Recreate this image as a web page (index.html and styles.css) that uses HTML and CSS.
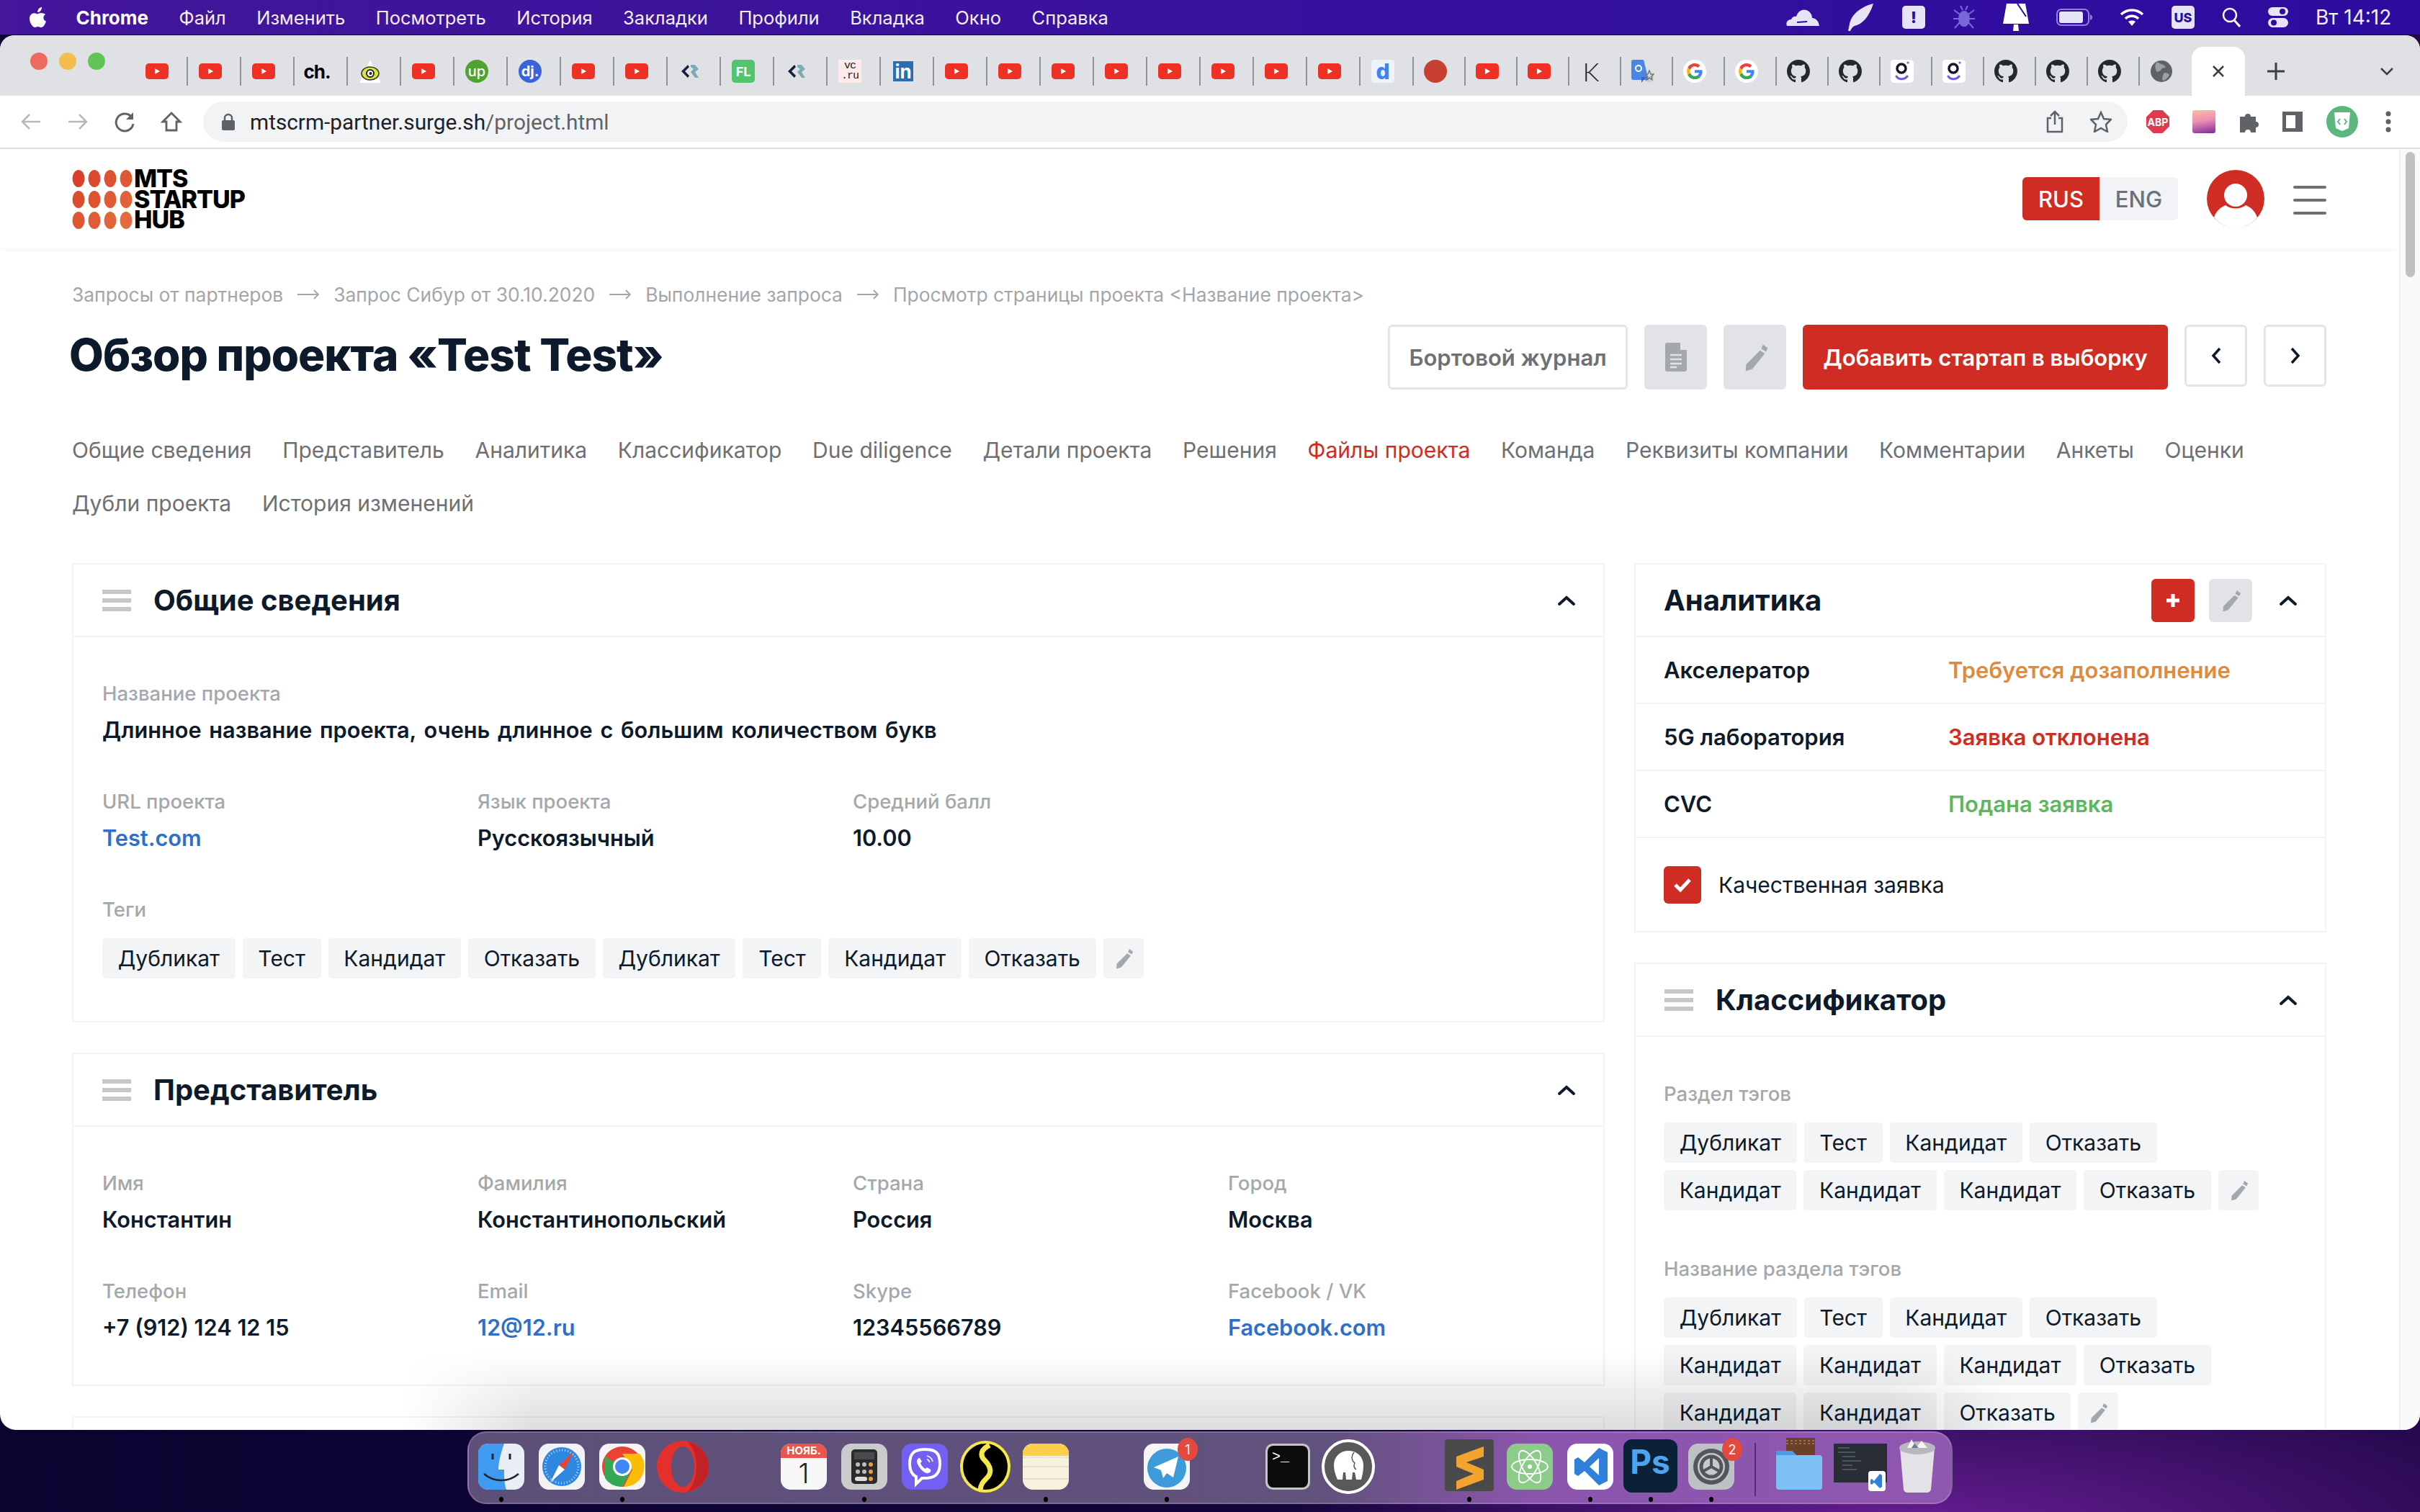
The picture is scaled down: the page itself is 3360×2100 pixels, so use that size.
FILE: index.html
```html
<!DOCTYPE html>
<html lang="ru">
<head>
  <meta charset="UTF-8">
  <title>Обзор проекта</title>
  <link rel="stylesheet" href="styles.css">
</head>
<body>

<svg class="defs" width="0" height="0">
  <symbol id="i-yt" viewBox="0 0 32 32"><rect y="5" width="32" height="22" rx="5" fill="#ee3124"/><path d="M13 12l7 4-7 4z" fill="#fff"/></symbol>
  <symbol id="i-lt" viewBox="0 0 32 32"><path d="M13 7L4 16l9 9 2-3-6-6 6-6z" fill="#14213d"/><path d="M17 7h6l5 6-5 4 5 8h-5l-6-8 4-4-4-3z" fill="#7fa9b5"/></symbol>
  <symbol id="i-g" viewBox="0 0 32 32"><circle cx="16" cy="16" r="16" fill="#fff"/><g transform="translate(5 5) scale(.46)"><path fill="#EA4335" d="M24 9.5c3.54 0 6.71 1.22 9.21 3.6l6.85-6.85C35.9 2.38 30.47 0 24 0 14.62 0 6.51 5.38 2.56 13.22l7.98 6.19C12.43 13.72 17.74 9.5 24 9.5z"/><path fill="#4285F4" d="M46.98 24.55c0-1.57-.15-3.09-.38-4.55H24v9.02h12.94c-.58 2.96-2.26 5.48-4.78 7.18l7.73 6c4.51-4.18 7.09-10.36 7.09-17.65z"/><path fill="#FBBC05" d="M10.53 28.59c-.48-1.45-.76-2.99-.76-4.59s.27-3.14.76-4.59l-7.98-6.19C.92 16.46 0 20.12 0 24c0 3.88.92 7.54 2.56 10.78l7.97-6.19z"/><path fill="#34A853" d="M24 48c6.48 0 11.93-2.13 16.06-5.81l-7.73-6c-2.15 1.45-4.92 2.3-8.33 2.3-6.26 0-11.57-4.22-13.47-9.91l-7.98 6.19C6.51 42.62 14.62 48 24 48z"/></g></symbol>
  <symbol id="i-gh" viewBox="0 0 16 16"><path fill="#24292e" d="M8 0C3.58 0 0 3.58 0 8c0 3.54 2.29 6.53 5.47 7.59.4.07.55-.17.55-.38 0-.19-.01-.82-.01-1.49-2.01.37-2.53-.49-2.69-.94-.09-.23-.48-.94-.82-1.13-.28-.15-.68-.52-.01-.53.63-.01 1.08.58 1.23.82.72 1.21 1.87.87 2.33.66.07-.52.28-.87.51-1.07-1.78-.2-3.64-.89-3.64-3.95 0-.87.31-1.59.82-2.15-.08-.2-.36-1.02.08-2.12 0 0 .67-.21 2.2.82.64-.18 1.32-.27 2-.27.68 0 1.36.09 2 .27 1.53-1.04 2.2-.82 2.2-.82.44 1.1.16 1.92.08 2.12.51.56.82 1.27.82 2.15 0 3.07-1.87 3.75-3.65 3.95.29.25.54.73.54 1.48 0 1.07-.01 1.93-.01 2.2 0 .21.15.46.55.38A8.013 8.013 0 0016 8c0-4.42-3.58-8-8-8z"/></symbol>
  <symbol id="i-o" viewBox="0 0 32 32"><rect width="32" height="32" rx="5" fill="#fff"/><circle cx="15" cy="12" r="6" fill="none" stroke="#14142b" stroke-width="3.5"/><circle cx="24" cy="4" r="1.6" fill="#6e5ae6"/><path d="M8 23c3 5 11 5 15 0" fill="none" stroke="#6e5ae6" stroke-width="3" stroke-linecap="round"/></symbol>
  <symbol id="i-pencil" viewBox="0 0 24 24"><path d="M18.5 1.500l4 3-1.500 3-4-2.500zM16 6.500l4 2.500L9.500 22 4 23.500l.5-5.500z"/></symbol>
  <symbol id="i-burger" viewBox="0 0 40 30"><path d="M0 0h40v6H0zM0 12h40v6H0zM0 24h40v6H0z" fill="#c5c7c9"/></symbol>
  <symbol id="i-up" viewBox="0 0 26 16"><path d="M3 13l10-9 10 9" fill="none" stroke="#0c1a2b" stroke-width="4" stroke-linecap="round"/></symbol>
</svg>

<header class="menubar">
  <svg class="apple" viewBox="0 0 24 30" width="24" height="30"><path fill="#fff" d="M17 1c.2 2.200-.7 3.800-1.700 5-1 1.200-2.500 2.100-4 2-.2-2 .7-3.800 1.700-5C14 1.800 15.700 1 17 1zM22 11c-1.700 1.200-2.600 2.700-2.600 4.700 0 2.300 1.300 4 3.600 5-.6 2-1.500 3.800-2.700 5.500-1.300 1.800-2.400 2.800-4 2.800-1.800 0-2.400-1.100-4.500-1.100-2.200 0-2.900 1.100-4.600 1.100-1.600 0-2.800-1.200-4.200-3.200C1.300 23.400 0 20 0 17c0-5 3.200-7.800 6.500-7.800 1.800 0 3.300 1.200 4.500 1.200 1.100 0 2.800-1.300 4.900-1.300 1.900 0 4.500.7 6.100 1.900z"/></svg>
  <strong class="menu-app">Chrome</strong>
  <span>Файл</span><span>Изменить</span><span>Посмотреть</span><span>История</span><span>Закладки</span><span>Профили</span><span>Вкладка</span><span>Окно</span><span>Справка</span>
  <div class="menu-right">
    <svg width="48" height="28" viewBox="0 0 48 28" class="m-cloud"><path fill="#e8e4f8" d="M2 26c-2-5 1-9 6-9 1-3 4-5 7-4 2-7 8-11 14-9 5 2 8 6 8 11 5 0 9 4 10 11z"/><path d="M16 21l14-1" stroke="#2c0c9f" stroke-width="2"/></svg>
    <svg width="38" height="38" viewBox="0 0 38 38" class="m-feather"><path fill="#e8e4f8" d="M36 0C20 4 6 14 3 28l-2 10 3 0c2-4 3-6 6-7 10-2 20-12 26-31z"/></svg>
    <span class="m-box m-excl">!</span>
    <svg width="32" height="36" viewBox="0 0 32 36" class="m-bug"><g fill="none" stroke="#7a68d8" stroke-width="2"><ellipse cx="16" cy="20" rx="7" ry="10" fill="#7a68d8"/><path d="M2 8l8 6M30 8l-8 6M1 20h8M31 20h-8M3 33l7-8M29 33l-7-8M11 2l3 6M21 2l-3 6"/></g></svg>
    <svg width="36" height="40" viewBox="0 0 36 40" class="m-lamp"><path fill="#fff" d="M5 1h26l5 28H0z"/><path fill="#fff" d="M15 30h6l1 9h-8z"/><path d="M20 1l12 18" stroke="#2c0c9f" stroke-width="2"/></svg>
    <svg width="50" height="24" viewBox="0 0 50 24" class="m-batt"><rect x="1" y="1" width="44" height="22" rx="6" fill="none" stroke="#8f84d8" stroke-width="2"/><rect x="4" y="4" width="33" height="16" rx="3" fill="#e8e4f8"/><path d="M47 8c2 1 3 2 3 4s-1 3-3 4z" fill="#8f84d8"/></svg>
    <svg width="34" height="26" viewBox="0 0 34 26" class="m-wifi"><g fill="none" stroke="#fff" stroke-width="3.500"><path d="M2 9c9-8 21-8 30 0M8 15c5-5 13-5 18 0"/></g><path d="M12 19c3-2 7-2 10 0l-5 6z" fill="#fff"/></svg>
    <span class="m-box m-us">US</span>
    <svg width="26" height="28" viewBox="0 0 26 28" class="m-search"><circle cx="11" cy="11" r="9" fill="none" stroke="#fff" stroke-width="2.500"/><path d="M17 18l8 9" stroke="#fff" stroke-width="3"/></svg>
    <svg width="28" height="28" viewBox="0 0 28 28" class="m-ctl"><rect y="0" width="28" height="12" rx="6" fill="#e8e4f8"/><circle cx="20" cy="6" r="4" fill="#2c0c9f"/><rect y="15" width="28" height="13" rx="6.500" fill="#e8e4f8"/><circle cx="8" cy="21.500" r="4" fill="#2c0c9f"/></svg>
    <span class="m-time">Вт 14:12</span>
  </div>
</header>

<main class="window">
  <div class="tabstrip">
    <div class="lights"><i class="l-red"></i><i class="l-yellow"></i><i class="l-green"></i></div>
    <div class="tabs">
      <div class="tab"><svg class="fav"><use href="#i-yt"/></svg></div>
      <div class="tab"><svg class="fav"><use href="#i-yt"/></svg></div>
      <div class="tab"><svg class="fav"><use href="#i-yt"/></svg></div>
      <div class="tab"><span class="fav-text fav-ch">ch.</span></div>
      <div class="tab"><svg class="fav" viewBox="0 0 32 32"><path d="M16 0l15 32H1z" fill="#fff"/><ellipse cx="16" cy="19" rx="12" ry="9" fill="#d8e63a" stroke="#333" stroke-width="1.500"/><circle cx="16" cy="19" r="5" fill="#fff" stroke="#222" stroke-width="2"/><circle cx="16.500" cy="19" r="2" fill="#222"/></svg></div>
      <div class="tab"><svg class="fav"><use href="#i-yt"/></svg></div>
      <div class="tab"><span class="fav-text fav-up">up</span></div>
      <div class="tab"><span class="fav-text fav-dj">dj.</span></div>
      <div class="tab"><svg class="fav"><use href="#i-yt"/></svg></div>
      <div class="tab"><svg class="fav"><use href="#i-yt"/></svg></div>
      <div class="tab"><svg class="fav"><use href="#i-lt"/></svg></div>
      <div class="tab"><span class="fav-text fav-fl">FL</span></div>
      <div class="tab"><svg class="fav"><use href="#i-lt"/></svg></div>
      <div class="tab"><span class="fav-text fav-vc">vc<br>.ru</span></div>
      <div class="tab"><span class="fav-text fav-in">in</span></div>
      <div class="tab"><svg class="fav"><use href="#i-yt"/></svg></div>
      <div class="tab"><svg class="fav"><use href="#i-yt"/></svg></div>
      <div class="tab"><svg class="fav"><use href="#i-yt"/></svg></div>
      <div class="tab"><svg class="fav"><use href="#i-yt"/></svg></div>
      <div class="tab"><svg class="fav"><use href="#i-yt"/></svg></div>
      <div class="tab"><svg class="fav"><use href="#i-yt"/></svg></div>
      <div class="tab"><svg class="fav"><use href="#i-yt"/></svg></div>
      <div class="tab"><svg class="fav"><use href="#i-yt"/></svg></div>
      <div class="tab"><span class="fav-text fav-d">d</span></div>
      <div class="tab tab-sm"><svg class="fav" viewBox="0 0 32 32"><circle cx="16" cy="16" r="16" fill="#c8402f"/></svg></div>
      <div class="tab tab-sm"><svg class="fav"><use href="#i-yt"/></svg></div>
      <div class="tab tab-sm"><svg class="fav"><use href="#i-yt"/></svg></div>
      <div class="tab tab-sm"><span class="fav-text fav-k">K</span></div>
      <div class="tab tab-sm"><svg class="fav" viewBox="0 0 32 32"><path d="M18 22l14 0-6 10-8-4z" fill="#c9ccd0"/><path d="M3 0h14l7 28H3a3 3 0 01-3-3V3a3 3 0 013-3z" fill="#4a86e8"/><path d="M14 24v8l6-8z" fill="#3a66b8"/><path d="M25 15l2 5h4l-3 3 1 5-4-3-4 3 1-5-3-3h4z" fill="none" stroke="#777" stroke-width="1.500"/><circle cx="10" cy="12" r="4" fill="none" stroke="#fff" stroke-width="2"/></svg></div>
      <div class="tab tab-sm"><svg class="fav"><use href="#i-g"/></svg></div>
      <div class="tab tab-sm"><svg class="fav"><use href="#i-g"/></svg></div>
      <div class="tab tab-sm"><svg class="fav"><use href="#i-gh"/></svg></div>
      <div class="tab tab-sm"><svg class="fav"><use href="#i-gh"/></svg></div>
      <div class="tab tab-sm"><svg class="fav"><use href="#i-o"/></svg></div>
      <div class="tab tab-sm"><svg class="fav"><use href="#i-o"/></svg></div>
      <div class="tab tab-sm"><svg class="fav"><use href="#i-gh"/></svg></div>
      <div class="tab tab-sm"><svg class="fav"><use href="#i-gh"/></svg></div>
      <div class="tab tab-sm"><svg class="fav"><use href="#i-gh"/></svg></div>
      <div class="tab tab-sm tab-last"><svg class="fav" viewBox="0 0 32 32"><circle cx="16" cy="16" r="15" fill="#5f6368"/><path d="M10 3c4 3 9 3 12 7-3 2-6 1-7 5l-5 2C7 13 6 7 10 3zM20 18c3 0 6 1 7 3-2 4-5 7-9 8-2-3 0-8 2-11z" fill="#9aa0a6"/></svg></div>
      <div class="tab-active"><svg width="18" height="18" viewBox="0 0 18 18"><path d="M2 2l14 14M16 2L2 16" stroke="#3c4043" stroke-width="2.500"/></svg></div>
      <svg class="tab-new" width="26" height="26" viewBox="0 0 26 26"><path d="M13 1v24M1 13h24" stroke="#3c4043" stroke-width="3"/></svg>
      <svg class="tab-more" width="20" height="12" viewBox="0 0 20 12"><path d="M2 2l8 8 8-8" fill="none" stroke="#3c4043" stroke-width="2.500"/></svg>
    </div>
  </div>

  <div class="toolbar">
    <svg class="tb-icon tb-back" width="30" height="30" viewBox="0 0 30 30"><path d="M28 15H3M13 5L3 15l10 10" fill="none" stroke="#b5b8bc" stroke-width="2.500"/></svg>
    <svg class="tb-icon" width="30" height="30" viewBox="0 0 30 30"><path d="M2 15h25M17 5l10 10-10 10" fill="none" stroke="#b5b8bc" stroke-width="2.500"/></svg>
    <svg class="tb-icon" width="30" height="30" viewBox="0 0 30 30"><path d="M25 9a12 12 0 10 2 9" fill="none" stroke="#5f6368" stroke-width="3"/><path d="M27 2v10H17z" fill="#5f6368"/></svg>
    <svg class="tb-icon" width="30" height="30" viewBox="0 0 30 30"><path d="M15 3L3 15h5v12h14V15h5z" fill="none" stroke="#5f6368" stroke-width="2.800"/></svg>
    <div class="omnibox">
      <svg width="18" height="24" viewBox="0 0 18 24"><path d="M4 10V7a5 5 0 0110 0v3" fill="none" stroke="#5f6368" stroke-width="2.500"/><rect y="10" width="18" height="14" rx="2" fill="#5f6368"/></svg>
      <span class="url">mtscrm-partner.surge.sh<span class="url-path">/project.html</span></span>
      <svg class="omni-share" width="24" height="32" viewBox="0 0 24 32"><path d="M7 11H2v19h20V11h-5M12 20V2M6 8l6-6 6 6" fill="none" stroke="#5f6368" stroke-width="2.500"/></svg>
      <svg class="omni-star" width="30" height="30" viewBox="0 0 30 30"><path d="M15 2l4 9 10 1-7 7 2 10-9-5-9 5 2-10-7-7 10-1z" fill="none" stroke="#5f6368" stroke-width="2.500"/></svg>
    </div>
    <div class="ext-abp">ABP</div>
    <div class="ext-color"></div>
    <svg class="ext-puzzle" width="30" height="30" viewBox="0 0 30 30"><path fill="#5f6368" d="M1 8h7a4 4 0 118 0h7v7a4 4 0 110 8v7H16a4 4 0 10-8 0H1z"/></svg>
    <svg class="ext-side" width="28" height="28" viewBox="0 0 28 28"><rect x="2.500" y="2.500" width="23" height="23" fill="none" stroke="#5f6368" stroke-width="5"/><rect x="18" y="2" width="8" height="24" fill="#5f6368"/></svg>
    <div class="ext-green"><svg width="24" height="28" viewBox="0 0 24 28"><path d="M1 1h22l-2 22-9 4-9-4z" fill="#fff"/><path d="M9 10l-3 4 3 4M15 10l3 4-3 4" fill="none" stroke="#5bb77e" stroke-width="2"/></svg></div>
    <svg class="ext-dots" width="8" height="30" viewBox="0 0 8 30"><circle cx="4" cy="4" r="3.500" fill="#5f6368"/><circle cx="4" cy="15" r="3.500" fill="#5f6368"/><circle cx="4" cy="26" r="3.500" fill="#5f6368"/></svg>
  </div>

  <div class="viewport">
    <div class="page">
      <div class="site-header">
        <div class="logo">
          <svg width="86" height="82" viewBox="0 0 86 82">
            <g fill="#d9402b"><ellipse cx="9" cy="12" rx="8.500" ry="12"/><ellipse cx="31" cy="12" rx="8.500" ry="12" fill="#db4a2e"/><ellipse cx="53" cy="12" rx="8.500" ry="12" fill="#dd5231"/><ellipse cx="75" cy="12" rx="8.500" ry="12" fill="#df5a34"/></g>
            <g fill="#dc4c2e"><ellipse cx="9" cy="41" rx="8.500" ry="12"/><ellipse cx="31" cy="41" rx="8.500" ry="12" fill="#de5431"/><ellipse cx="53" cy="41" rx="8.500" ry="12" fill="#e05b35"/><ellipse cx="75" cy="41" rx="8.500" ry="12" fill="#e16138"/></g>
            <g fill="#df5631"><ellipse cx="9" cy="70" rx="8.500" ry="12"/><ellipse cx="31" cy="70" rx="8.500" ry="12" fill="#e05c35"/><ellipse cx="53" cy="70" rx="8.500" ry="12" fill="#e2653a"/><ellipse cx="75" cy="70" rx="8.500" ry="12" fill="#e36b3e"/></g>
          </svg>
          <div class="logo-text">MTS<br>STARTUP<br>HUB</div>
        </div>
        <div class="header-right">
          <div class="lang"><span class="lang-on">RUS</span><span class="lang-off">ENG</span></div>
          <svg class="avatar" width="80" height="80" viewBox="0 0 80 80"><circle cx="40" cy="40" r="40" fill="#cf2d24"/><circle cx="40" cy="35" r="16" fill="#fff"/><path d="M10 66c3-9 9-14 16-17 8 6 20 6 28 0 7 3 13 8 16 17-16 19-44 19-60 0z" fill="#fff"/></svg>
          <div class="site-burger"><i></i><i></i><i></i></div>
        </div>
      </div>

      <div class="content">
        <nav class="crumbs">
          <span>Запросы от партнеров</span><svg width="30" height="14" viewBox="0 0 30 14"><path d="M0 7h29M23 1l6 6-6 6" fill="none" stroke="#a3a6aa" stroke-width="1.800"/></svg>
          <span>Запрос Сибур от 30.10.2020</span><svg width="30" height="14" viewBox="0 0 30 14"><path d="M0 7h29M23 1l6 6-6 6" fill="none" stroke="#a3a6aa" stroke-width="1.800"/></svg>
          <span>Выполнение запроса</span><svg width="30" height="14" viewBox="0 0 30 14"><path d="M0 7h29M23 1l6 6-6 6" fill="none" stroke="#a3a6aa" stroke-width="1.800"/></svg>
          <span>Просмотр страницы проекта &lt;Название проекта&gt;</span>
        </nav>

        <div class="title-row">
          <h1>Обзор проекта «Test Test»</h1>
          <div class="actions">
            <button class="btn btn-outline">Бортовой журнал</button>
            <button class="btn btn-gray"><svg width="30" height="40" viewBox="0 0 30 40"><path d="M3 0h17l10 11v26a3 3 0 01-3 3H3a3 3 0 01-3-3V3a3 3 0 013-3z" fill="#a4a8ad"/><path d="M21 0l9 10h-9z" fill="#e1e3e6"/><path d="M7 17h16M7 23h16M7 29h16M7 34h9" stroke="#e1e3e6" stroke-width="2.500"/></svg></button>
            <button class="btn btn-gray"><svg class="pencil" width="40" height="40"><use href="#i-pencil"/></svg></button>
            <button class="btn btn-red">Добавить стартап в выборку</button>
            <button class="btn btn-nav"><svg width="14" height="24" viewBox="0 0 14 24"><path d="M12 2L3 12l9 10" fill="none" stroke="#0c1a2b" stroke-width="3.500"/></svg></button>
            <button class="btn btn-nav"><svg width="14" height="24" viewBox="0 0 14 24"><path d="M2 2l9 10-9 10" fill="none" stroke="#0c1a2b" stroke-width="3.500"/></svg></button>
          </div>
        </div>

        <div class="nav-tabs">
          <a>Общие сведения</a><a>Представитель</a><a>Аналитика</a><a>Классификатор</a><a>Due diligence</a><a>Детали проекта</a><a>Решения</a><a class="nav-active">Файлы проекта</a><a>Команда</a><a>Реквизиты компании</a><a>Комментарии</a><a>Анкеты</a><a>Оценки</a><a>Дубли проекта</a><a>История изменений</a>
        </div>

        <div class="columns">
          <div class="col-main">
            <section class="card">
              <div class="card-head">
                <svg class="drag" width="40" height="30"><use href="#i-burger"/></svg>
                <h2>Общие сведения</h2>
                <svg class="chevron" width="26" height="16"><use href="#i-up"/></svg>
              </div>
              <div class="card-body info-grid">
                <div class="field field-wide"><label>Название проекта</label><div class="value value-long">Длинное название проекта, очень длинное с большим количеством букв</div></div>
                <div class="field"><label>URL проекта</label><a class="value link">Test.com</a></div>
                <div class="field"><label>Язык проекта</label><div class="value">Русскоязычный</div></div>
                <div class="field field-span2"><label>Средний балл</label><div class="value">10.00</div></div>
                <div class="field field-wide">
                  <label>Теги</label>
                  <div class="chips">
                    <span class="chip">Дубликат</span><span class="chip">Тест</span><span class="chip">Кандидат</span><span class="chip">Отказать</span><span class="chip">Дубликат</span><span class="chip">Тест</span><span class="chip">Кандидат</span><span class="chip">Отказать</span><span class="chip chip-edit"><svg class="pencil" width="30" height="30"><use href="#i-pencil"/></svg></span>
                  </div>
                </div>
              </div>
            </section>

            <section class="card">
              <div class="card-head">
                <svg class="drag" width="40" height="30"><use href="#i-burger"/></svg>
                <h2>Представитель</h2>
                <svg class="chevron" width="26" height="16"><use href="#i-up"/></svg>
              </div>
              <div class="card-body info-grid">
                <div class="field"><label>Имя</label><div class="value">Константин</div></div>
                <div class="field"><label>Фамилия</label><div class="value">Константинопольский</div></div>
                <div class="field"><label>Страна</label><div class="value">Россия</div></div>
                <div class="field"><label>Город</label><div class="value">Москва</div></div>
                <div class="field"><label>Телефон</label><div class="value">+7 (912) 124 12 15</div></div>
                <div class="field"><label>Email</label><a class="value link">12@12.ru</a></div>
                <div class="field"><label>Skype</label><div class="value">12345566789</div></div>
                <div class="field"><label>Facebook / VK</label><a class="value link">Facebook.com</a></div>
              </div>
            </section>

            <section class="card card-next"></section>
          </div>

          <aside class="col-side">
            <section class="card">
              <div class="card-head card-head-side">
                <h2>Аналитика</h2>
                <button class="mini mini-red"><svg width="24" height="24" viewBox="0 0 24 24"><path d="M12 3v18M3 12h18" stroke="#fff" stroke-width="5"/></svg></button>
                <button class="mini mini-gray"><svg class="pencil" width="32" height="32"><use href="#i-pencil"/></svg></button>
                <svg class="chevron chevron-side" width="26" height="16"><use href="#i-up"/></svg>
              </div>
              <div class="status-row"><span class="status-name">Акселератор</span><span class="st-orange">Требуется дозаполнение</span></div>
              <div class="status-row"><span class="status-name">5G лаборатория</span><span class="st-red">Заявка отклонена</span></div>
              <div class="status-row"><span class="status-name">CVC</span><span class="st-green">Подана заявка</span></div>
              <div class="check-row">
                <span class="checkbox"><svg width="26" height="22" viewBox="0 0 26 22"><path d="M3 11l7 7L23 4" fill="none" stroke="#fff" stroke-width="5"/></svg></span>
                <span>Качественная заявка</span>
              </div>
            </section>

            <section class="card">
              <div class="card-head">
                <svg class="drag" width="40" height="30"><use href="#i-burger"/></svg>
                <h2>Классификатор</h2>
                <svg class="chevron" width="26" height="16"><use href="#i-up"/></svg>
              </div>
              <div class="card-body tags-body">
                <div class="tag-group">
                  <label>Раздел тэгов</label>
                  <div class="chips">
                    <span class="chip">Дубликат</span><span class="chip">Тест</span><span class="chip">Кандидат</span><span class="chip">Отказать</span><span class="chip">Кандидат</span><span class="chip">Кандидат</span><span class="chip">Кандидат</span><span class="chip">Отказать</span><span class="chip chip-edit"><svg class="pencil" width="30" height="30"><use href="#i-pencil"/></svg></span>
                  </div>
                </div>
                <div class="tag-group">
                  <label>Название раздела тэгов</label>
                  <div class="chips">
                    <span class="chip">Дубликат</span><span class="chip">Тест</span><span class="chip">Кандидат</span><span class="chip">Отказать</span><span class="chip">Кандидат</span><span class="chip">Кандидат</span><span class="chip">Кандидат</span><span class="chip">Отказать</span><span class="chip">Кандидат</span><span class="chip">Кандидат</span><span class="chip">Отказать</span><span class="chip chip-edit"><svg class="pencil" width="30" height="30"><use href="#i-pencil"/></svg></span>
                  </div>
                </div>
              </div>
            </section>
          </aside>
        </div>
      </div>
    </div>
    <div class="scrollbar"><div class="scroll-thumb"></div></div>
    <div class="dock-shade"></div>
  </div>
</main>

<footer class="dock">
  <div class="slot on"><svg viewBox="-10 -10 84 84"><rect width="64" height="64" rx="14" fill="#e9eef4"/><path d="M14 0h22c-5 14-8 26-8 36h8c0 10 0 19 3 28H14A14 14 0 010 50V14A14 14 0 0114 0z" fill="#3f9bf0"/><path d="M20 14v8M44 14v8" stroke="#1a2433" stroke-width="3"/><path d="M8 42c14 12 34 12 48 0" fill="none" stroke="#1a2433" stroke-width="2.500"/></svg></div>
  <div class="slot"><svg viewBox="-10 -10 84 84"><rect width="64" height="64" rx="14" fill="#f1f2f4"/><circle cx="32" cy="32" r="27" fill="#2f87e0"/><circle cx="32" cy="32" r="23" fill="none" stroke="#bfdcf7" stroke-width="3" stroke-dasharray="1 3"/><path d="M48 12L28 30l8 6z" fill="#ea4335"/><path d="M16 54l20-18-8-6z" fill="#fff"/></svg></div>
  <div class="slot on"><svg viewBox="-10 -10 84 84"><rect width="64" height="64" rx="14" fill="#f4f4f5"/><circle cx="32" cy="32" r="28" fill="#ea4335"/><path d="M32 32L8 18v30a28 28 0 0024 12l14-26z" fill="#34a853"/><path d="M32 14h24a28 28 0 01-22 46l12-24z" fill="#fbbc05"/><circle cx="32" cy="32" r="13" fill="#fff"/><circle cx="32" cy="32" r="10" fill="#4285f4"/></svg></div>
  <div class="slot"><svg viewBox="-10 -10 84 84"><path fill-rule="evenodd" d="M32-4C12-4-4 12-4 32S12 68 32 68 68 52 68 32 52-4 32-4zM32 4c9 0 16 12 16 28S41 60 32 60 16 48 16 32 23 4 32 4z" fill="#e3302c"/><path d="M38-3c18 4 30 18 30 35S56 63 38 67c8-6 13-20 13-35S46 3 38-3z" fill="#c22226"/></svg></div>
  <div class="slot slot-empty"></div>
  <div class="slot"><svg viewBox="-10 -10 84 84"><rect width="64" height="64" rx="14" fill="#f7f7f7"/><path d="M14 0h36a14 14 0 0114 14v6H0v-6A14 14 0 0114 0z" fill="#e8574d"/><text class="dock-cal-month" x="32" y="15" text-anchor="middle">НОЯБ.</text><text class="dock-cal-day" x="32" y="55" text-anchor="middle">1</text></svg></div>
  <div class="slot on"><svg viewBox="-10 -10 84 84"><rect width="64" height="64" rx="14" fill="#c9cbcc"/><rect x="14" y="8" width="36" height="48" rx="5" fill="#2b2b2d"/><rect x="18" y="12" width="28" height="10" fill="#4a4a4c"/><g fill="#bdbdbd"><circle cx="23" cy="29" r="3"/><circle cx="32" cy="29" r="3"/><circle cx="23" cy="39" r="3"/><circle cx="32" cy="39" r="3"/></g><g fill="#e89a3c"><circle cx="41" cy="29" r="3"/><circle cx="41" cy="39" r="3"/><circle cx="41" cy="49" r="3"/></g><rect x="19" y="46" width="17" height="6" rx="3" fill="#dcdcdc"/></svg></div>
  <div class="slot"><svg viewBox="-10 -10 84 84"><rect width="64" height="64" rx="14" fill="#7360f2"/><path d="M32 8c-14 0-21 5-21 20 0 9 3 15 9 18v10l8-8c16 1 25-4 25-20S46 8 32 8z" fill="none" stroke="#fff" stroke-width="4"/><path d="M24 20c-4 2-4 6 0 12s9 10 13 9c3-1 4-3 3-5l-5-3-2 2c-3-1-6-5-7-8l2-2-3-5z" fill="#fff"/><path d="M35 17c4 1 7 4 8 8M35 22c2 0 3 2 4 4" fill="none" stroke="#fff" stroke-width="1.500"/></svg></div>
  <div class="slot"><svg viewBox="-10 -10 84 84"><ellipse cx="32" cy="32" rx="33" ry="34" fill="#000" stroke="#f5e94a" stroke-width="4"/><path d="M38 2c-12 6-14 14-7 21 9 9 11 18 2 26-4 4-7 7-8 15" fill="none" stroke="#f5e94a" stroke-width="7"/></svg></div>
  <div class="slot on"><svg viewBox="-10 -10 84 84"><rect width="64" height="64" rx="14" fill="#f7f2de"/><path d="M14 0h36a14 14 0 0114 14v3H0v-3A14 14 0 0114 0z" fill="#fbcf4c"/><path d="M0 32h64M0 49h64" stroke="#ddd9c8" stroke-width="1.500"/><path d="M0 19h64" stroke="#b9b29c" stroke-dasharray="1 2"/></svg></div>
  <div class="slot slot-empty"></div>
  <div class="slot on"><svg viewBox="-10 -10 84 84"><rect width="64" height="64" rx="14" fill="#f3f5f7"/><circle cx="32" cy="34" r="27" fill="#3d9bd9"/><path d="M48 18L14 33l10 4 3 11 5-7 9 6z" fill="#fff"/></svg><span class="badge">1</span></div>
  <div class="slot slot-empty"></div>
  <div class="slot"><svg viewBox="-10 -10 84 84"><rect width="62" height="64" rx="10" fill="#c4c5c6" x="1"/><rect width="56" height="58" rx="8" fill="#0b0b0c" x="4" y="3"/><text class="dock-term" x="10" y="24">&gt;_</text></svg></div>
  <div class="slot"><svg viewBox="-10 -10 84 84"><ellipse cx="32" cy="32" rx="35" ry="36" fill="#595959" stroke="#fff" stroke-width="4"/><path d="M12 30c0-12 9-20 20-20 12 0 21 8 21 20 0 7-1 12-3 20h-7l-2-10h-3l-1 10h-8l-1-10h-3l-1 10h-7c-3-7-5-13-5-20z" fill="#fff"/><path d="M40 12c-5 6-3 12 1 15-2 4-1 7 2 9" fill="none" stroke="#595959" stroke-width="1.500"/></svg></div>
  <div class="slot slot-empty"></div>
  <div class="slot on"><svg viewBox="-10 -10 84 84"><rect x="-2" y="-6" width="68" height="72" rx="4" fill="#4a4a4a"/><path d="M52 4L14 18v14l24 10-24 10v12l38-14V36L28 26l24-8z" fill="#f3a32f"/></svg></div>
  <div class="slot"><svg viewBox="-10 -10 84 84"><rect width="64" height="64" rx="14" fill="#8ccb8a"/><g fill="none" stroke="#fff" stroke-width="1.800"><ellipse cx="32" cy="32" rx="10" ry="25" transform="rotate(-30 32 32)"/><ellipse cx="32" cy="32" rx="10" ry="25" transform="rotate(30 32 32)"/><ellipse cx="32" cy="32" rx="25" ry="10" transform="rotate(0 32 32)"/></g><circle cx="32" cy="32" r="3" fill="#fff"/></svg></div>
  <div class="slot on"><svg viewBox="-10 -10 84 84"><rect width="64" height="64" rx="14" fill="#fff"/><path d="M44 6l12 6v40l-12 6-20-20-9 7-5-3V22l5-3 9 7zM44 20L31 32l13 12z" fill="#2f80d8"/></svg></div>
  <div class="slot on"><svg viewBox="-10 -10 84 84"><rect x="-6" y="-6" width="75" height="74" rx="12" fill="#0b2138"/><text class="dock-ps" x="31" y="42" text-anchor="middle">Ps</text></svg></div>
  <div class="slot on"><svg viewBox="-10 -10 84 84"><rect width="64" height="64" rx="14" fill="#bfc2c4"/><circle cx="32" cy="32" r="25" fill="#54575a"/><circle cx="32" cy="32" r="19" fill="#c8cacc"/><circle cx="32" cy="32" r="14" fill="none" stroke="#54575a" stroke-width="5"/><path d="M32 32V16M32 32L18 40M32 32l14 8" stroke="#54575a" stroke-width="4"/></svg><span class="badge badge-2">2</span></div>
  <div class="dock-sep"></div>
  <div class="slot slot-docs"><svg viewBox="-10 -10 84 84"><rect x="14" y="-8" width="40" height="26" fill="#6b4028"/><path d="M14 -4h40M14 0h40" stroke="#c99a6b" stroke-dasharray="3 3"/><path d="M0 14a4 4 0 014-4h18l6 6h32a4 4 0 014 4v40a4 4 0 01-4 4H4a4 4 0 01-4-4z" fill="#7cc0f5"/><path d="M0 10h22l6 6H0z" fill="#4a9ae4"/></svg></div>
  <div class="slot slot-docs"><svg viewBox="-10 -10 84 84"><rect x="-4" y="0" width="74" height="54" fill="#282c34"/><path d="M2 6h16M2 12h24M8 18h18M8 24h26M8 30h14M8 36h20" stroke="#5a6270" stroke-width="1.500"/><rect x="44" y="38" width="24" height="28" rx="4" fill="#fff"/><path d="M60 42l3 2v16l-3 2-8-8-3 3-2-1v-6l2-1 3 3z" fill="#2f80d8"/></svg></div>
  <div class="slot slot-trash"><svg viewBox="-10 -10 84 84"><path d="M8 6h48l-5 58a6 6 0 01-6 4H19a6 6 0 01-6-4z" fill="#e4e2e6"/><ellipse cx="32" cy="6" rx="25" ry="9" fill="#b9b6bd"/><path d="M18 6l6-12 6 12zM30 6l8-10 8 10z" fill="#f5f5f5"/><path d="M24 6l4-6 6 6z" fill="#6a7b8c"/></svg></div>
</footer>

</body>
</html>
```

FILE: styles.css
```css
* {
  box-sizing: border-box;
}
html, body {
  margin: 0;
  height: 100%;
}
body {
  position: relative;
  width: 3360px;
  height: 2100px;
  overflow: hidden;
  font-family: Inter, "Noto Sans", sans-serif;
  color: #0c1a2b;
  background:
    radial-gradient(ellipse 900px 260px at 2650px 2140px, #6d1f9a 0%, rgba(109,31,154,0) 100%),
    linear-gradient(90deg, #0b0330 0%, #12053a 55%, #24084c 100%);
}
.defs {
  position: absolute;
}

/* mac menu bar */
.menubar {
  height: 49px;
  display: flex;
  align-items: center;
  gap: 42.500px;
  padding-left: 41px;
  background: linear-gradient(90deg, #43169a 0%, #3a129c 40%, #2c0c9f 100%);
  color: #f2effb;
  font-size: 25.500px;
  border-bottom: 1px solid #14063f;
}
.apple {
  margin-right: -2px;
}
.menu-app {
  font-weight: 700;
  font-size: 26px;
  color: #fff;
}
.menu-right {
  margin-left: auto;
  display: flex;
  align-items: center;
  gap: 38px;
  padding-right: 37px;
}
.m-box {
  width: 32px;
  height: 32px;
  border-radius: 5px;
  background: #e8e4f8;
  color: #2c0c9f;
  font-weight: 800;
  display: flex;
  align-items: center;
  justify-content: center;
  font-size: 22px;
}
.m-us {
  font-size: 18px;
}
.m-time {
  font-size: 28px;
  width: 108px;
  white-space: nowrap;
}

/* browser window */
.window {
  height: 1937px;
  display: flex;
  flex-direction: column;
  border-radius: 20px 20px 22px 22px;
  overflow: hidden;
  background: #fff;
}
.tabstrip {
  height: 84px;
  flex: none;
  display: flex;
  align-items: center;
  background: #dfe1e5;
  padding-top: 16px;
}
.lights {
  width: 187px;
  height: 24px;
  flex: none;
  display: flex;
  gap: 16px;
  padding-left: 42px;
  margin-top: -29px;
}
.lights i {
  width: 24px;
  height: 24px;
  border-radius: 50%;
}
.l-red { background: #ee6a5f; }
.l-yellow { background: #f5bd4f; }
.l-green { background: #61c454; }
.tabs {
  flex: 1;
  height: 100%;
  display: flex;
  align-items: center;
}
.tab {
  width: 74px;
  height: 40px;
  flex: none;
  display: flex;
  align-items: center;
  padding-left: 15px;
  border-right: 2px solid #8f9296;
}
.tab-sm {
  width: 72px;
  padding-left: 14px;
}
.tab-last {
  border-right: 0;
}
.fav {
  width: 32px;
  height: 32px;
  flex: none;
}
.fav-text {
  width: 32px;
  height: 32px;
  flex: none;
  display: flex;
  align-items: center;
  justify-content: center;
  font-weight: 700;
  font-size: 22px;
  color: #fff;
}
.fav-ch { color: #000; font-size: 26px; letter-spacing: -1px; }
.fav-up { background: #4fa32e; border-radius: 50%; font-size: 20px; font-weight: 500; }
.fav-dj { background: #3b62d8; border-radius: 50%; font-size: 20px; }
.fav-fl { background: #52c46d; border-radius: 5px; font-size: 18px; }
.fav-vc {
  background: #fdeaea;
  color: #222;
  font-family: "Liberation Mono", monospace;
  font-weight: 400;
  font-size: 15px;
  line-height: 14px;
  text-align: center;
  letter-spacing: -1px;
}
.fav-in { background: #2a6db0; width: 28px; height: 28px; margin-left: 2px; font-size: 26px; }
.fav-d { background: #eef3fb; color: #3b82f6; border-radius: 4px; font-size: 30px; font-weight: 800; }
.fav-k { color: #222; font-weight: 300; font-size: 36px; font-family: Lato, sans-serif; }
.tab-active {
  width: 74px;
  height: 68px;
  margin-left: 0;
  flex: none;
  display: flex;
  align-items: center;
  justify-content: center;
  background: #fff;
  border-radius: 16px 16px 0 0;
  align-self: flex-end;
}
.tab-new {
  margin-left: 30px;
}
.tab-more {
  margin-left: 131px;
}
.toolbar {
  height: 74px;
  flex: none;
  display: flex;
  align-items: center;
  border-bottom: 2px solid #dcdee0;
  background: #fff;
}
.tb-icon {
  margin-left: 35px;
  flex: none;
}
.tb-back {
  margin-left: 28px;
}
.omnibox {
  width: 2672px;
  height: 56px;
  margin-left: 29px;
  flex: none;
  display: flex;
  align-items: center;
  padding-left: 26px;
  background: #f1f3f4;
  border-radius: 28px;
}
.url {
  margin-left: 21px;
  font-family: Roboto, sans-serif;
  font-size: 29.800px;
  color: #202124;
}
.url-path {
  color: #5f6368;
}
.omni-share {
  margin-left: auto;
}
.omni-star {
  margin-left: 37px;
  margin-right: 22px;
}
.ext-abp {
  width: 32px;
  height: 32px;
  margin-left: 26px;
  flex: none;
  display: flex;
  align-items: center;
  justify-content: center;
  background: #e03a4e;
  color: #fff;
  font-size: 14px;
  font-weight: 700;
  clip-path: polygon(30% 0, 70% 0, 100% 30%, 100% 70%, 70% 100%, 30% 100%, 0 70%, 0 30%);
}
.ext-color {
  width: 32px;
  height: 32px;
  margin-left: 32px;
  flex: none;
  border-radius: 3px;
  background: linear-gradient(170deg, #f6bfa0 0%, #ee8fb4 45%, #7e2a9c 100%);
}
.ext-puzzle {
  margin-left: 33px;
  flex: none;
}
.ext-side {
  margin-left: 30px;
  flex: none;
}
.ext-green {
  width: 44px;
  height: 44px;
  margin-left: 33px;
  flex: none;
  display: flex;
  align-items: center;
  justify-content: center;
  border-radius: 50%;
  background: #5bb77e;
}
.ext-dots {
  margin-left: 38px;
  flex: none;
}

/* page */
.viewport {
  position: relative;
  flex: 1;
  min-height: 0;
  display: flex;
  overflow: hidden;
}
.page {
  width: 3331px;
  flex: none;
}
.scrollbar {
  flex: 1;
  background: #fafafa;
  border-left: 2px solid #ededed;
  padding: 4px 7px 0 7px;
}
.scroll-thumb {
  height: 174px;
  border-radius: 8px;
  background: #c1c1c1;
}
.dock-shade {
  position: absolute;
  left: 560px;
  right: 560px;
  bottom: 0;
  height: 110px;
  background: linear-gradient(0deg, rgba(0,0,0,.13) 0%, rgba(0,0,0,0) 100%);
  -webkit-mask-image: linear-gradient(90deg, transparent 0%, #000 8%, #000 92%, transparent 100%);
  pointer-events: none;
}
.site-header {
  height: 138px;
  display: flex;
  align-items: center;
  justify-content: space-between;
  padding: 0 101px 0 100px;
  box-shadow: 0 2px 6px rgba(0,0,0,.04);
}
.logo {
  display: flex;
  align-items: center;
  gap: 0;
  margin-top: 2px;
}
.logo-text {
  font-weight: 800;
  font-size: 34px;
  line-height: 28.500px;
  letter-spacing: -1px;
  color: #000;
}
.header-right {
  display: flex;
  align-items: center;
}
.lang {
  display: flex;
  font-size: 31px;
  font-weight: 500;
  height: 60px;
  border-radius: 6px;
  overflow: hidden;
}
.lang span {
  display: flex;
  align-items: center;
  justify-content: center;
}
.lang-on {
  width: 107px;
  background: #cf2d24;
  color: #fff;
}
.lang-off {
  width: 109px;
  background: #f1f3f6;
  color: #6d7074;
}
.avatar {
  margin-left: 40px;
}
.site-burger {
  width: 46px;
  margin: 3px 0 0 40px;
  display: flex;
  flex-direction: column;
  gap: 14px;
}
.site-burger i {
  height: 4px;
  border-radius: 2px;
  background: #6d7074;
}
.content {
  padding: 47px 101px 0 100px;
}
.crumbs {
  display: flex;
  align-items: center;
  gap: 20px;
  height: 34px;
  font-size: 26.400px;
  color: #a3a6aa;
}
.title-row {
  display: flex;
  align-items: center;
  justify-content: space-between;
  margin-top: 25px;
  height: 90px;
}
h1 {
  margin: 0 0 8px -4px;
  font-size: 62px;
  font-weight: 800;
  letter-spacing: -1px;
}
.actions {
  display: flex;
  align-items: flex-start;
  gap: 23px;
  height: 90px;
}
.btn {
  height: 90px;
  display: flex;
  align-items: center;
  justify-content: center;
  border-radius: 6px;
  font-family: inherit;
  font-size: 31px;
  font-weight: 600;
  padding: 0;
}
.btn-outline {
  width: 333px;
  background: #fff;
  border: 3px solid #e3e5e9;
  color: #6d7074;
}
.btn-gray {
  width: 87px;
  background: #e1e3e6;
  border: 0;
}
.btn-red {
  width: 507px;
  background: #cf2d24;
  border: 0;
  color: #fff;
}
.btn-nav {
  width: 87px;
  height: 86px;
  background: #fff;
  border: 3px solid #e3e5e9;
}
.pencil {
  fill: #a4a8ad;
}
.nav-tabs {
  display: flex;
  flex-wrap: wrap;
  column-gap: 42.700px;
  margin-top: 47px;
  font-size: 30px;
  line-height: 74px;
  color: #6d7074;
}
.nav-active {
  color: #cf2d24;
}
.columns {
  display: flex;
  gap: 41px;
  margin-top: 46px;
  align-items: flex-start;
}
.col-main {
  width: 2128px;
  flex: none;
}
.col-side {
  width: 961px;
  flex: none;
}
.card {
  border: 2px solid #f3f4f6;
  margin-bottom: 42px;
  background: #fff;
}
.card-next {
  height: 300px;
}
.card-head {
  height: 101px;
  display: flex;
  align-items: center;
  padding: 0 38px 0 40px;
  border-bottom: 2px solid #f3f4f6;
}
.card-head-side {
  padding-left: 39px;
}
.card-head h2 {
  margin: 0;
  font-size: 40px;
  font-weight: 700;
}
.drag {
  margin-right: 31px;
  flex: none;
}
.chevron {
  margin-left: auto;
  flex: none;
}
.chevron-side {
  margin-left: 37px;
}
.mini {
  width: 60px;
  height: 60px;
  display: flex;
  align-items: center;
  justify-content: center;
  border: 0;
  border-radius: 6px;
  padding: 0;
}
.mini-red {
  margin-left: auto;
  background: #cf2d24;
}
.mini-gray {
  margin-left: 20px;
  background: #e1e3e6;
}
.card-body {
  padding: 62px 0 59px 40px;
}
.info-grid {
  display: grid;
  grid-template-columns: repeat(4, 1fr);
  row-gap: 63px;
}
.field-wide {
  grid-column: 1 / -1;
}
.field-span2 {
  grid-column: span 2;
}
label {
  display: block;
  height: 32px;
  font-size: 27.500px;
  line-height: 32px;
  font-weight: 500;
  color: #a5a8ab;
}
.value {
  display: block;
  margin-top: 15px;
  font-size: 30.700px;
  line-height: 40px;
  font-weight: 600;
}
.value-long {
  word-spacing: 3px;
}
.link {
  color: #2f6fc9;
}
.chips {
  display: flex;
  flex-wrap: wrap;
  gap: 10px;
  margin-top: 24px;
}
.chip {
  height: 56px;
  padding: 0 21.700px;
  display: flex;
  align-items: center;
  background: #f2f4f6;
  border-radius: 5px;
  font-size: 30px;
}
.chip-edit {
  width: 56px;
  padding: 0;
  justify-content: center;
}
.status-row {
  height: 93px;
  display: flex;
  align-items: center;
  padding-left: 39px;
  border-bottom: 2px solid #f3f4f6;
  font-size: 31px;
  font-weight: 600;
}
.status-name {
  width: 395px;
  flex: none;
}
.st-orange { color: #e08a3c; }
.st-red { color: #cf2d24; }
.st-green { color: #5cb85c; }
.check-row {
  height: 129px;
  display: flex;
  align-items: center;
  gap: 24px;
  padding-left: 39px;
  font-size: 30px;
}
.checkbox {
  width: 52px;
  height: 52px;
  display: flex;
  align-items: center;
  justify-content: center;
  background: #cf2d24;
  border-radius: 6px;
}
.tags-body {
  padding: 63px 0 0 39px;
}
.tag-group {
  width: 850px;
  margin-bottom: 65px;
}

/* dock */
.dock {
  position: absolute;
  left: 649px;
  top: 1988px;
  width: 2062px;
  height: 101px;
  display: flex;
  align-items: flex-start;
  padding: 5px 0 0 3px;
  border: 2px solid rgba(255,255,255,.16);
  border-radius: 26px;
  background: linear-gradient(90deg, #5d5078 0%, #62527e 58%, #8b55ad 72%, #8f57b0 100%);
}
.slot {
  position: relative;
  width: 84px;
  height: 84px;
  flex: none;
}
.slot svg {
  display: block;
  width: 84px;
  height: 84px;
  overflow: visible;
}
.on::after {
  content: "";
  position: absolute;
  left: 39px;
  top: 84px;
  width: 6px;
  height: 7px;
  border-radius: 50%;
  background: #000;
}
.badge {
  position: absolute;
  left: 57px;
  top: 2px;
  width: 28px;
  height: 32px;
  display: flex;
  align-items: center;
  justify-content: center;
  border-radius: 50%;
  background: #e5483f;
  color: #fff;
  font-size: 18px;
}
.dock-sep {
  width: 2px;
  height: 74px;
  margin: 9px 18px 0 18px;
  flex: none;
  background: rgba(60,30,80,.7);
}
.slot-trash {
  margin-left: -4px;
}
.dock-cal-month {
  font-size: 15px;
  font-weight: 700;
  fill: #fff;
}
.dock-cal-day {
  font-size: 38px;
  font-weight: 300;
  fill: #222;
}
.dock-term {
  font-family: "Liberation Mono", monospace;
  font-size: 20px;
  fill: #fff;
}
.dock-ps {
  font-size: 46px;
  font-weight: 700;
  fill: #4ea4f0;
}
```
